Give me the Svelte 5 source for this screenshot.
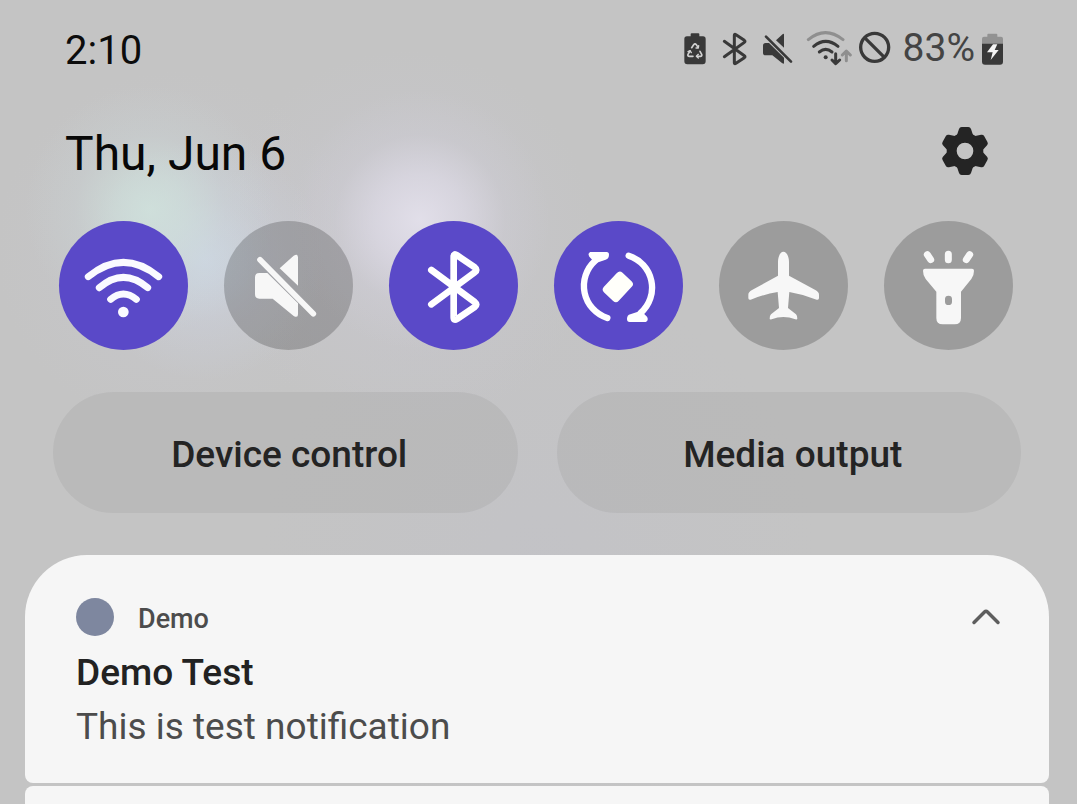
<script>
  let tiles = $state([
    { id: 'wifi', label: 'Wi-Fi', on: true, box: '27 33 387 387' },
    { id: 'mute', label: 'Mute', on: false, box: '522 33 387 387' },
    { id: 'bluetooth', label: 'Bluetooth', on: true, box: '27 33 387 387' },
    { id: 'rotate', label: 'Auto rotate', on: true, box: '522 33 387 387' },
    { id: 'plane', label: 'Airplane mode', on: false, box: '27 33 387 387' },
    { id: 'torch', label: 'Flashlight', on: false, box: '522 33 387 387' }
  ]);
  const teeth = [0, 60, 120, 180, 240, 300];
</script>

<div class="shade">
  <header class="status">
    <time class="clock">2:10</time>
    <div class="indicators">
      <svg width="28" height="35" viewBox="39 30 84 105" aria-hidden="true">
        <path d="M65 37h20q3 0 3 3v6h11q8 0 8 8v67q0 9-9 9H52q-9 0-9-9V54q0-8 8-8h11v-6q0-3 3-3z" fill="#393939" />
        <g fill="none" stroke="#d2d2d2" stroke-width="5" stroke-linecap="round" stroke-linejoin="round">
          <path d="M65 80l6-9q4-5 8 0l5 8M90 91l5 9q2 6-4 6H81M69 106H58q-6 0-4-6l6-10" />
          <path d="M78 81l7 0 1-7M85 100l-6 6 6 5M54 92l6-3 4 6" stroke-width="4" />
        </g>
      </svg>
      <svg width="34" height="35" viewBox="141 30 102 105" aria-hidden="true">
        <path d="M163 61l60 43q4 3 0 6l-25 17q-5 3-5-2V43q0-5 5-2l25 17q4 3 0 6l-60 43" fill="none" stroke="#393939" stroke-width="9" stroke-linecap="round" stroke-linejoin="round" />
      </svg>
      <svg width="39" height="35" viewBox="261 30 117 105" aria-hidden="true">
        <path d="M342 41v39l-24-22 18-17q6-5 6 0zM287 66h10l45 44v16q0 5-6 0l-29-23h-20q-8 0-8-8V74q0-8 8-8z" fill="#393939" />
        <path d="M288 47l75 75" stroke="#393939" stroke-width="8" stroke-linecap="round" />
      </svg>
      <svg width="50" height="35" viewBox="396 30 150 105" aria-hidden="true">
        <g fill="none" stroke-width="9" stroke-linecap="round" stroke-linejoin="round">
          <path d="M415 56q51-42 104 0M529 119V92M517 102l12-12 12 12" stroke="#8f8f8f" />
          <path d="M431 76q36-30 73 0M448 93q19-16 38 0M497 98v28M486 117l11 11 12-11" stroke="#393939" />
        </g>
        <circle cx="467" cy="109" r="6" fill="#393939" />
      </svg>
      <svg width="36" height="35" viewBox="54 30 108 105" aria-hidden="true">
        <g fill="none" stroke="#393939" stroke-width="10">
          <circle cx="104" cy="79" r="42" />
          <path d="M73 49l61 61" />
        </g>
      </svg>
      <span class="percent">83%</span>
      <svg width="23" height="35" viewBox="423 30 69 105" aria-hidden="true">
        <path d="M426 69V53q0-6 6-6h10v-6q0-3 3-3h24q3 0 3 3v6h11q6 0 6 6v16z" fill="#929292" />
        <path d="M426 68h63v54q0 9-9 9h-45q-9 0-9-9z" fill="#393939" />
        <path d="M459 70h13l-8 17h12l-24 30 6-23h-17z" fill="#f4f4f4" />
      </svg>
    </div>
  </header>

  <div class="dateline">
    <h1>Thu, Jun 6</h1>
    <button class="gear" aria-label="Settings">
      <svg width="48" height="48" viewBox="65 50 144 144" aria-hidden="true">
        <circle cx="137" cy="122" r="40" fill="none" stroke="#242424" stroke-width="30" />
        {#each teeth as angle}
          <path d="M111 80L119 56Q121 50 127 50H147Q153 50 155 56L163 80Z" fill="#242424" transform="rotate({angle} 137 122)" />
        {/each}
      </svg>
    </button>
  </div>

  <div class="tiles">
    {#each tiles as tile (tile.id)}
      <button class="tile" class:on={tile.on} aria-label={tile.label} aria-pressed={tile.on} onclick={() => (tile.on = !tile.on)}>
        <svg viewBox={tile.box} aria-hidden="true">
          {#if tile.id === 'wifi'}
            <g fill="none" stroke="#fafaff" stroke-width="21" stroke-linecap="round">
              <path d="M115 200Q220 114 326 200" />
              <path d="M148 233Q220 171 293 233" />
              <path d="M182 268Q220 236 259 268" />
            </g>
            <circle cx="220" cy="306" r="16" fill="#fafaff" />
          {:else if tile.id === 'mute'}
            <path d="M744 142v85l-55-52 42-38q13-8 13 5zM628 189h24l92 91v33q0 12-13 5l-63-52h-40q-13 0-13-13v-51q0-13 13-13z" fill="#f7f7f7" />
            <path d="M630 149l160 162" stroke="#f7f7f7" stroke-width="17" stroke-linecap="round" />
          {:else if tile.id === 'bluetooth'}
            <path d="M154 180L284 276Q294 284 284 291L231 327Q221 333 221 322V140Q221 129 231 136L284 172Q294 180 284 187L154 283" fill="none" stroke="#fff" stroke-width="20" stroke-linecap="round" stroke-linejoin="round" />
          {:else if tile.id === 'rotate'}
            <g fill="none" stroke="#fff" stroke-width="19" stroke-linecap="round">
              <path d="M682 324A101 101 0 0 1 646 152" />
              <path d="M746 137A101 101 0 0 1 782 309" />
            </g>
            <path d="M631 126h49q7 0 7 8 0 12-10 15l-31 11-18-20q-6-10 3-14zM797 336h-48q-8 0-8-9 0-12 10-14l32-11 18 18q6 11-4 16z" fill="#fff" />
            <rect x="673" y="200" width="81" height="61" rx="12" transform="rotate(-47 713.500 230.500)" fill="#fffffa" />
          {:else if tile.id === 'plane'}
            <path d="M220 125c11 0 17 17 17 31v41l79 43q11 6 11 14v10q0 7-7 5-40-16-82-23l-4 48 24 19q4 4 4 13 0 3-6 2-36-14-71 0-6 1-6-2 0-9 4-13l24-19-4-48q-42 7-81 23-7 2-7-5v-10q0-8 11-14l78-43v-41c0-14 6-31 16-31z" fill="#f7f7f7" />
          {:else}
            <path d="M652 134l10 15M715 133v16M779 134l-10 15" stroke="#f7f7f7" stroke-width="21" stroke-linecap="round" />
            <path fill-rule="evenodd" d="M645 176h141q6 0 6 6 0 15-8 25l-31 38v79q0 19-19 19h-36q-19 0-19-19v-79l-32-38q-8-10-8-25 0-6 6-6zM705 267v8a10.500 10 0 0 0 21 0v-8a10.500 10 0 0 0-21 0z" fill="#f7f7f7" />
          {/if}
        </svg>
      </button>
    {/each}
  </div>

  <div class="shortcuts">
    <button>Device control</button>
    <button>Media output</button>
  </div>

  <main class="notifications">
    <article class="card first">
      <div class="source">
        <span class="dot"></span>
        <span class="app-name">Demo</span>
        <button class="collapse" aria-label="Collapse">
          <svg width="30" height="20" viewBox="0 0 30 20" aria-hidden="true">
            <path d="M3 15.500L13.500 5Q15 3.500 16.500 5L27 15.500" fill="none" stroke="#5e5e5e" stroke-width="3.500" stroke-linecap="round" />
          </svg>
        </button>
      </div>
      <h2>Demo Test</h2>
      <p>This is test notification</p>
    </article>
    <article class="card next" aria-label="Next notification"></article>
  </main>
</div>

<style>
  :global(body) {
    margin: 0;
  }
  .shade {
    box-sizing: border-box;
    min-height: 100vh;
    display: flex;
    flex-direction: column;
    padding-top: 24px;
    font-family: Roboto, sans-serif;
    background:
      radial-gradient(circle at 150px 210px, rgba(208, 228, 221, 0.8) 0, rgba(207, 226, 220, 0.6) 35px, rgba(204, 218, 218, 0.25) 75px, rgba(200, 206, 212, 0) 125px),
      radial-gradient(circle at 420px 220px, rgba(228, 225, 236, 0.9) 0, rgba(223, 220, 232, 0.65) 45px, rgba(212, 210, 221, 0.25) 85px, rgba(204, 203, 212, 0) 130px),
      radial-gradient(circle at 205px 260px, rgba(206, 216, 230, 0.8) 0, rgba(204, 210, 222, 0.4) 60px, rgba(202, 204, 216, 0) 120px),
      radial-gradient(circle at 405px 240px, rgba(204, 202, 212, 0.6) 0, rgba(200, 199, 206, 0.4) 110px, rgba(198, 198, 204, 0) 190px),
      radial-gradient(circle at 175px 250px, rgba(202, 202, 212, 0.6) 0, rgba(200, 200, 206, 0.3) 100px, rgba(198, 198, 204, 0) 180px),
      radial-gradient(circle at 540px 560px, rgba(193, 193, 202, 0.4) 0, rgba(194, 194, 202, 0) 280px),
      #c4c4c4;
  }
  button {
    border: 0;
    padding: 0;
    font: inherit;
    background: none;
    cursor: pointer;
  }
  svg {
    display: block;
    flex: none;
  }
  h1,
  h2,
  p {
    margin: 0;
  }
  .status {
    display: flex;
    justify-content: space-between;
    align-items: center;
    height: 48px;
    padding: 0 73px 0 65px;
  }
  .clock {
    font-size: 40px;
    line-height: 52px;
    color: #0c0c0c;
    padding-top: 6px;
  }
  .indicators {
    display: flex;
    align-items: center;
    gap: 6px;
  }
  .percent {
    font-size: 39px;
    line-height: 48px;
    color: #444;
    padding-left: 3px;
  }
  .dateline {
    display: flex;
    justify-content: space-between;
    align-items: center;
    height: 64px;
    margin-top: 48px;
    padding: 0 88px 0 65px;
  }
  .gear {
    padding-bottom: 2px;
  }
  h1 {
    font-size: 48px;
    line-height: 64px;
    font-weight: 400;
    color: #080808;
    padding-top: 4px;
  }
  .tiles {
    display: flex;
    justify-content: space-between;
    margin-top: 37px;
    padding: 0 64px 0 59px;
  }
  .tile {
    width: 129px;
    height: 129px;
    border-radius: 50%;
    background: rgba(0, 0, 0, 0.2);
  }
  .tile.on {
    background: #5a49c8;
  }
  .tile svg {
    width: 100%;
    height: 100%;
  }
  .shortcuts {
    display: grid;
    grid-template-columns: 1fr 1fr;
    gap: 39px;
    margin-top: 42px;
    padding: 0 56px 0 53px;
  }
  .shortcuts button {
    height: 121px;
    padding: 4px 0 0 8px;
    border-radius: 61px;
    background: rgba(0, 0, 0, 0.05);
    font-size: 37px;
    line-height: 48px;
    font-weight: 500;
    color: #242424;
  }
  .notifications {
    flex: 1;
    display: flex;
    flex-direction: column;
    gap: 3px;
    margin-top: 42px;
    padding: 0 28px 0 25px;
  }
  .card {
    background: #f6f6f6;
    border-radius: 8px;
  }
  .first {
    border-radius: 62px 62px 8px 8px;
    padding: 42px 48px 29px 51px;
  }
  .next {
    flex: 1;
    min-height: 16px;
    border-radius: 8px 8px 0 0;
  }
  .source {
    display: flex;
    align-items: center;
    height: 40px;
  }
  .dot {
    width: 38px;
    height: 38px;
    border-radius: 50%;
    background: #7e879f;
  }
  .app-name {
    margin-left: 24px;
    padding-top: 4px;
    font-size: 27px;
    line-height: 36px;
    font-weight: 500;
    color: #4c4c4c;
  }
  .collapse {
    margin-left: auto;
  }
  h2 {
    margin-top: 9px;
    font-size: 37px;
    line-height: 54px;
    font-weight: 500;
    color: #222;
  }
  p {
    font-size: 37px;
    line-height: 54px;
    color: #4c4c4c;
  }
</style>
